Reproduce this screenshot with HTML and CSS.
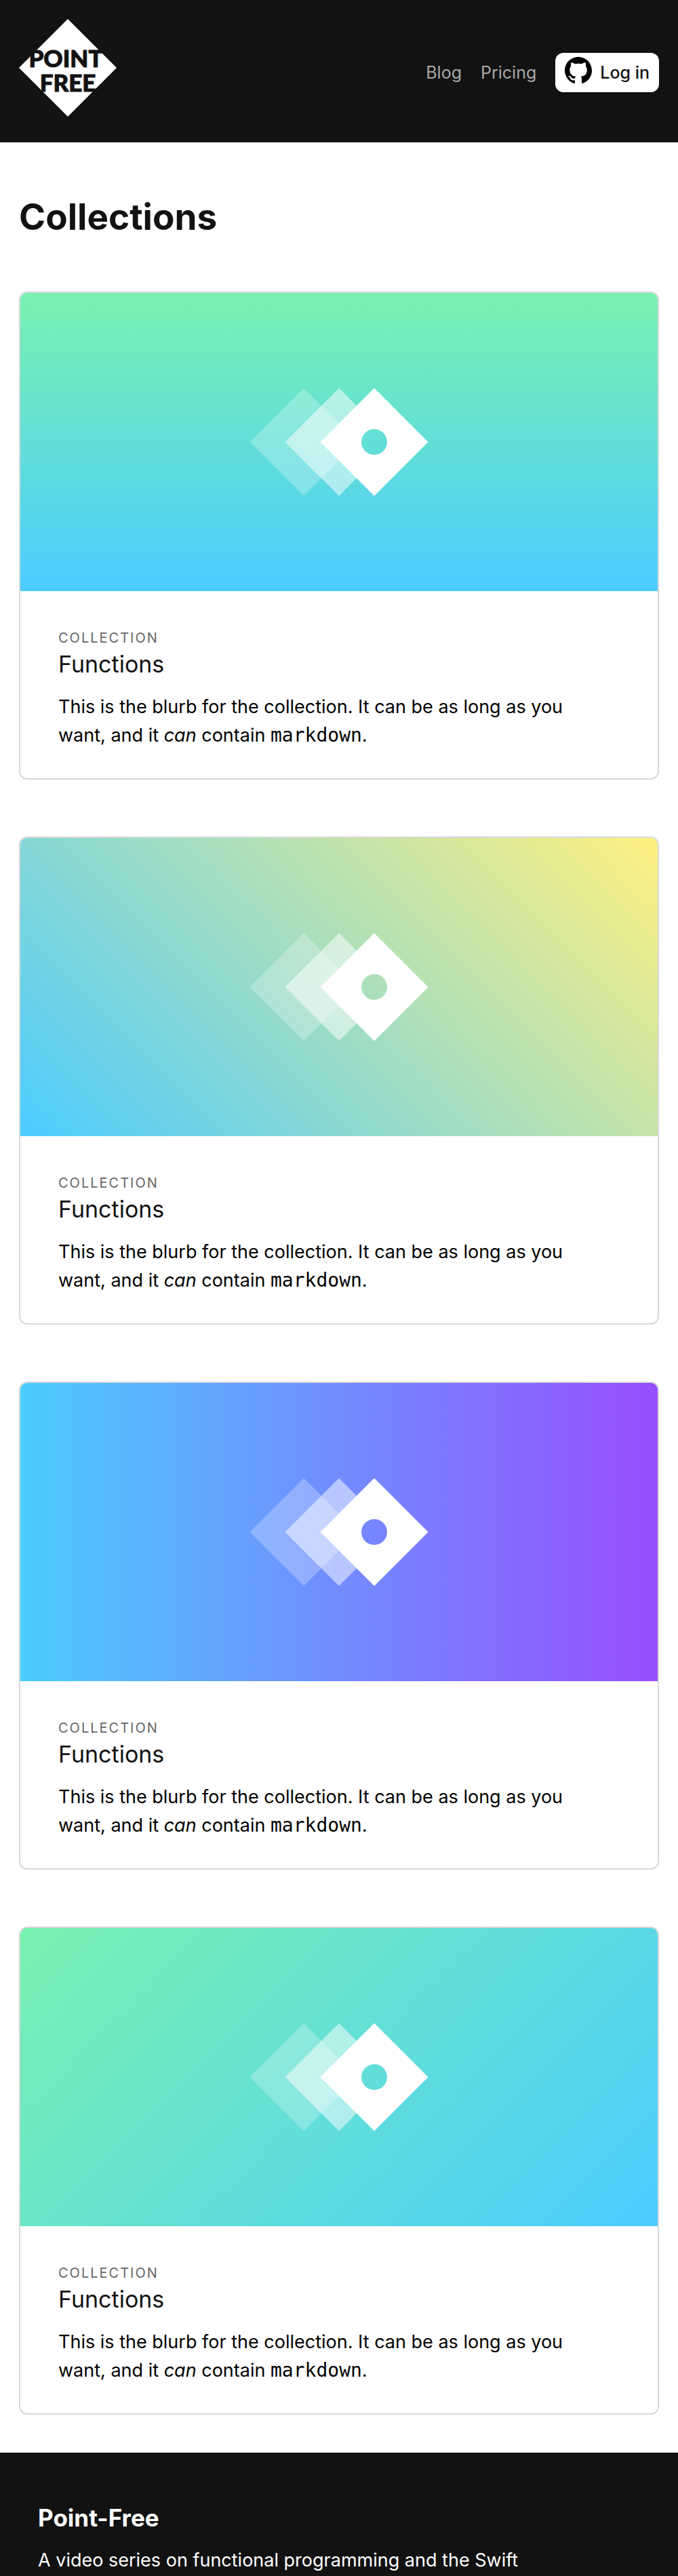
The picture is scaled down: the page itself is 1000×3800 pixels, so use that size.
FILE: index.html
```html
<!DOCTYPE html>
<html lang="en">
<head>
<meta charset="utf-8">
<meta name="viewport" content="width=device-width, initial-scale=1">
<title>Collections</title>
<link rel="stylesheet" href="styles.css">
</head>
<body>
<svg class="sprite" aria-hidden="true">
  <symbol id="diamonds" viewBox="0 0 264 160">
    <path d="M0.5 80 80 .5 159.500 80 80 159.500Z" fill="#fff" fill-opacity=".25"/>
    <path d="M52.500 80 132 .5 160 28.500V131.500L132 159.500Z" fill="#fff" fill-opacity=".5"/>
    <path fill-rule="evenodd" d="M104.500 80 184 .5 263.500 80 184 159.500ZM184 61a19 19 0 1 0 0 38a19 19 0 1 0 0-38Z" fill="#fff"/>
  </symbol>
</svg>
<header class="header">
  <a class="logo" href="#" aria-label="Point-Free">
    <svg width="144" height="144" viewBox="0 0 144 144">
      <path d="M0 72 72 0 144 72 72 144Z" fill="#fff"/>
      <text class="logo-text" x="69" y="71" text-anchor="middle">POINT</text>
      <text class="logo-text" x="72" y="107" text-anchor="middle">FREE</text>
    </svg>
  </a>
  <nav class="nav">
    <a class="nav-link" href="#">Blog</a>
    <a class="nav-link" href="#">Pricing</a>
    <a class="login" href="#">
      <svg width="40" height="40" viewBox="0 0 16 16" aria-hidden="true"><path fill-rule="evenodd" d="M8 0C3.580 0 0 3.580 0 8c0 3.540 2.290 6.530 5.470 7.590.4.070.55-.17.55-.38 0-.19-.010-.82-.010-1.490-2.010.37-2.530-.49-2.690-.94-.090-.23-.48-.94-.82-1.130-.28-.15-.68-.52-.010-.53.63-.010 1.080.58 1.230.82.72 1.210 1.870.87 2.330.66.070-.52.28-.87.510-1.070-1.780-.2-3.640-.89-3.640-3.950 0-.87.310-1.590.82-2.150-.080-.2-.36-1.020.080-2.120 0 0 .67-.21 2.200.82.64-.18 1.320-.27 2-.27s1.360.090 2 .27c1.530-1.040 2.200-.82 2.200-.82.44 1.100.16 1.920.080 2.120.510.56.82 1.270.82 2.150 0 3.070-1.870 3.750-3.650 3.950.29.25.54.73.54 1.480 0 1.070-.010 1.930-.010 2.200 0 .21.150.46.550.38A8.010 8.010 0 0 0 16 8c0-4.420-3.580-8-8-8z"/></svg>
      <span>Log in</span>
    </a>
  </nav>
</header>
<main class="main">
  <h1 class="title">Collections</h1>
  <article class="card">
    <div class="cover cover-down"><svg class="mark" aria-hidden="true"><use href="#diamonds"/></svg></div>
    <div class="body">
      <p class="kicker">Collection</p>
      <h2 class="name"><a href="#">Functions</a></h2>
      <p class="blurb">This is the blurb for the collection. It can be as long as you want, and it <em>can</em> contain <code>markdown</code>.</p>
    </div>
  </article>
  <article class="card">
    <div class="cover cover-sun"><svg class="mark" aria-hidden="true"><use href="#diamonds"/></svg></div>
    <div class="body">
      <p class="kicker">Collection</p>
      <h2 class="name"><a href="#">Functions</a></h2>
      <p class="blurb">This is the blurb for the collection. It can be as long as you want, and it <em>can</em> contain <code>markdown</code>.</p>
    </div>
  </article>
  <article class="card">
    <div class="cover cover-dusk"><svg class="mark" aria-hidden="true"><use href="#diamonds"/></svg></div>
    <div class="body">
      <p class="kicker">Collection</p>
      <h2 class="name"><a href="#">Functions</a></h2>
      <p class="blurb">This is the blurb for the collection. It can be as long as you want, and it <em>can</em> contain <code>markdown</code>.</p>
    </div>
  </article>
  <article class="card">
    <div class="cover cover-slant"><svg class="mark" aria-hidden="true"><use href="#diamonds"/></svg></div>
    <div class="body">
      <p class="kicker">Collection</p>
      <h2 class="name"><a href="#">Functions</a></h2>
      <p class="blurb">This is the blurb for the collection. It can be as long as you want, and it <em>can</em> contain <code>markdown</code>.</p>
    </div>
  </article>
</main>
<footer class="footer">
  <h2 class="footer-title">Point-Free</h2>
  <p class="footer-text">A video series on functional programming and the Swift</p>
</footer>
</body>
</html>
```
FILE: styles.css
```css
* { box-sizing: border-box; }

body {
  margin: 0;
  background: #fff;
  color: #000;
  font-family: Inter, "Liberation Sans", sans-serif;
  font-size: 27px;
  line-height: 42px;
}

h1, h2, p { margin: 0; }
a { color: inherit; text-decoration: none; }
svg { display: block; }
.sprite { position: absolute; width: 0; height: 0; }

.header {
  display: flex;
  align-items: center;
  justify-content: space-between;
  padding: 28px 28px 38px;
  background: #121212;
}
.logo-text {
  fill: #121212;
  stroke: #121212;
  stroke-width: 1px;
  font-family: Lato, sans-serif;
  font-size: 35px;
  font-weight: 900;
}
.nav {
  display: flex;
  align-items: center;
  gap: 28px;
  padding-top: 14px;
  font-size: 25px;
}
.nav-link { color: #a8a8a8; }
.login {
  display: flex;
  align-items: center;
  gap: 12px;
  height: 58px;
  padding: 0 14px;
  border-radius: 12px;
  background: #fff;
  color: #121212;
  font-weight: 500;
}
.login svg { margin-bottom: 6px; fill: #000; }

.main {
  display: flex;
  flex-direction: column;
  gap: 84px;
  padding: 84px 28px 56px;
}
.title {
  color: #121212;
  font-size: 53px;
  font-weight: 700;
  line-height: 52px;
}
.card {
  overflow: hidden;
  border: 2px solid #d8d8d8;
  border-radius: 12px;
}
.cover {
  display: flex;
  align-items: center;
  justify-content: center;
  height: 440px;
}
.mark { width: 264px; height: 160px; }
.cover-down { background: linear-gradient(180deg, #79f2b0, #4cccff); }
.cover-sun { background: linear-gradient(45deg, #4cccff, #fff080); }
.cover-dusk { background: linear-gradient(90deg, #4cccff, #974dff); }
.cover-slant { background: linear-gradient(135deg, #79f2b0, #4cccff); }

.body { padding: 56px 72px 42px 56px; }
.kicker {
  color: #666;
  font-size: 20px;
  line-height: 26px;
  letter-spacing: 2px;
  text-transform: uppercase;
}
.name {
  margin-bottom: 16px;
  color: #121212;
  font-size: 34px;
  font-weight: 400;
  line-height: 52px;
}
.blurb code { font-family: "DejaVu Sans Mono", monospace; font-size: 28px; line-height: 1; }

.footer {
  padding: 72px 56px 56px;
  background: #121212;
  color: #fff;
}
.footer-title {
  margin-bottom: 18px;
  font-size: 35px;
  font-weight: 700;
  line-height: 48px;
}
```
